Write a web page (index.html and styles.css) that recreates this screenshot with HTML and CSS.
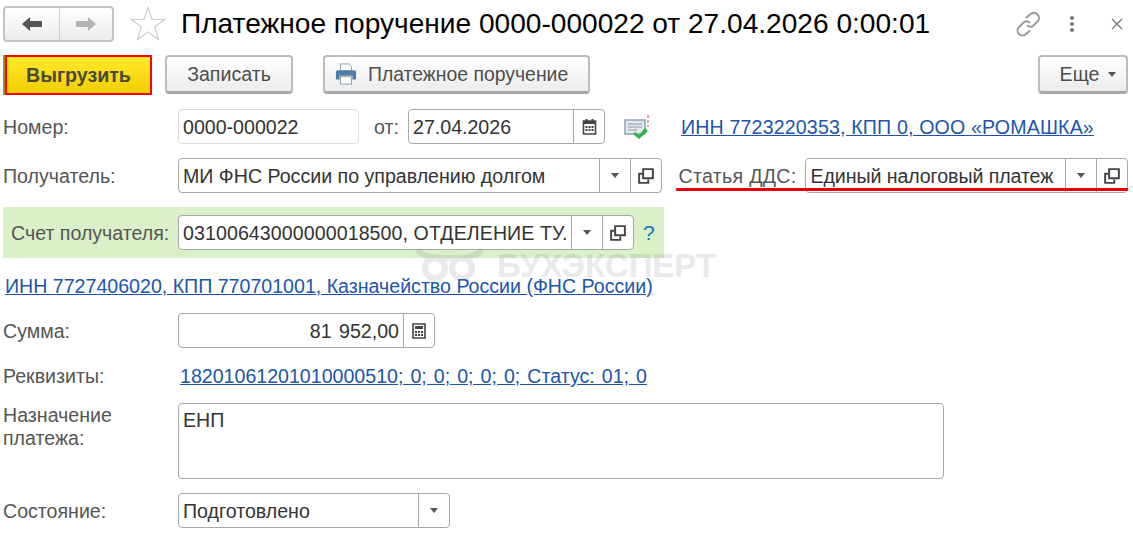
FILE: index.html
```html
<!DOCTYPE html>
<html lang="ru">

<head>
    <meta charset="UTF-8">
    <meta name="viewport" content="width=device-width, initial-scale=1.0">
    <title>Платежное поручение</title>
    <link rel="stylesheet" href="styles.css">
</head>

<body>
    <div class="watermark">
        <svg width="83" height="40" viewBox="0 0 83 40">
            <g fill="none" stroke="#6e6e82" stroke-width="6">
                <circle cx="21" cy="22" r="10" />
                <circle cx="48" cy="22" r="10" />
                <path d="M3 4 C12 13 24 12 35 12 C46 12 58 13 68 4" />
            </g>
        </svg>
        <span>БУХЭКСПЕРТ</span>
    </div>

    <div class="page">
        <div class="head">
            <div class="nav">
                <div class="nav-bt">
                    <svg width="22" height="16" viewBox="0 0 22 16">
                        <path d="M1 8 L9 1 V5 H21 V11 H9 V15 Z" fill="#555" />
                    </svg>
                </div>
                <div class="nav-bt">
                    <svg width="22" height="16" viewBox="0 0 22 16">
                        <path d="M21 8 L13 1 V5 H1 V11 H13 V15 Z" fill="#b4b4b4" />
                    </svg>
                </div>
            </div>
            <svg class="star" width="36" height="36" viewBox="0 0 36 36">
                <path d="M18 1.500 L22 13.500 H34.500 L24.500 21 L28.500 33.500 L18 26 L7.500 33.500 L11.500 21 L1.500 13.500 H14 Z" fill="#fff" stroke="#c9ced3" stroke-width="1.200" />
            </svg>
            <h1>Платежное поручение 0000-000022 от 27.04.2026 0:00:01</h1>
            <div class="head-icons">
                <svg width="26" height="26" viewBox="0 0 26 26">
                    <g fill="none" stroke="#9a9a9a" stroke-width="2">
                        <path d="M11 7 L15 3.500 C17.500 1.500 20.500 1.500 22.500 3.500 C24.500 5.500 24.500 8.500 22.500 10.500 L18.500 14.500 C16.500 16.500 13.500 16 12 14" />
                        <path d="M15 12 C13.500 10 10.500 9.500 8.500 11.500 L4 16 C2 18 2 21 4 23 C6 25 9 25 11 23 L15 19.500" />
                    </g>
                </svg>
                <div class="dots"><i></i><i></i><i></i></div>
                <svg width="12" height="12" viewBox="0 0 12 12">
                    <path d="M1 1 L11 11 M11 1 L1 11" stroke="#777" stroke-width="1.300" />
                </svg>
            </div>
        </div>

        <div class="toolbar">
            <div class="btn btn-main">Выгрузить</div>
            <div class="btn btn-save">Записать</div>
            <div class="btn btn-print">
                <svg width="22" height="24" viewBox="0 0 24 24">
                    <path d="M6 1 H15 L18 4 V9 H6 Z" fill="#fff" stroke="#8a99a8" />
                    <path d="M3 8 H21 Q23 8 23 10 V18 H19 V14 H5 V18 H1 V10 Q1 8 3 8 Z" fill="#4e7da6" />
                    <rect x="6" y="15" width="12" height="8" fill="#fff" stroke="#8a99a8" />
                </svg>
                Платежное поручение
            </div>
            <div class="btn btn-more">Еще <b class="arrow"></b></div>
        </div>

        <div class="row row-number">
            <label class="lbl">Номер:</label>
            <div class="field field-number"><span class="val">0000-000022</span></div>
            <label class="lbl-from">от:</label>
            <div class="field field-date">
                <span class="val">27.04.2026</span>
                <div class="cell cell-cal">
                    <svg width="15" height="16" viewBox="0 0 14 16">
                        <path d="M1 2 H13 V15 H1 Z" fill="none" stroke="#444" stroke-width="1.600" />
                        <path d="M1 2 H13 V5 H1 Z M3 0 H5 V3 H3 Z M9 0 H11 V3 H9 Z" fill="#444" />
                        <path d="M3 7 H5 V9 H3 Z M6 7 H8 V9 H6 Z M9 7 H11 V9 H9 Z M3 10 H5 V12 H3 Z M6 10 H8 V12 H6 Z M9 10 H11 V12 H9 Z" fill="#444" />
                    </svg>
                </div>
            </div>
            <svg class="doc-icon" width="26" height="24" viewBox="0 0 26 24">
                <path d="M1 5 H21 V19 H1 Z" fill="#e3e8ec" stroke="#8fa3b5" stroke-width="1.500" />
                <path d="M4 9 H18 M4 12 H18 M4 15 H13" stroke="#8c98a3" stroke-width="1.200" />
                <path d="M11 17 L15 20 L21 13 L24 16 L15 24 L9 19 Z" fill="#2fb344" />
                <path d="M24 0 V3 M24 5 V8 M24 10 V12" stroke="#e04040" />
            </svg>
            <a class="link link-org" href="#">ИНН 7723220353, КПП 0, ООО «РОМАШКА»</a>
        </div>

        <div class="row row-payee">
            <label class="lbl">Получатель:</label>
            <div class="field field-payee">
                <span class="val">МИ ФНС России по управлению долгом</span>
                <div class="cell"><b class="arrow"></b></div>
                <div class="cell">
                    <svg class="open-icon" width="16" height="16" viewBox="0 0 14 14">
                        <path d="M4.500 1 H13 V9 H4.500 Z" fill="none" stroke="#444" stroke-width="1.700" />
                        <path d="M4 5 H1 V13 H9 V10" fill="none" stroke="#444" stroke-width="1.700" />
                    </svg>
                </div>
            </div>
            <div class="dds">
                <label class="lbl-dds">Статья ДДС:</label>
                <div class="field field-dds">
                    <span class="val">Единый налоговый платеж</span>
                    <div class="cell"><b class="arrow"></b></div>
                    <div class="cell">
                        <svg class="open-icon" width="16" height="16" viewBox="0 0 14 14">
                            <path d="M4.500 1 H13 V9 H4.500 Z" fill="none" stroke="#444" stroke-width="1.700" />
                            <path d="M4 5 H1 V13 H9 V10" fill="none" stroke="#444" stroke-width="1.700" />
                        </svg>
                    </div>
                </div>
            </div>
        </div>

        <div class="account">
            <label class="lbl lbl-account">Счет получателя:</label>
            <div class="field field-account">
                <span class="val val-account">03100643000000018500, ОТДЕЛЕНИЕ ТУ.</span>
                <div class="cell"><b class="arrow"></b></div>
                <div class="cell">
                    <svg class="open-icon" width="16" height="16" viewBox="0 0 14 14">
                        <path d="M4.500 1 H13 V9 H4.500 Z" fill="none" stroke="#444" stroke-width="1.700" />
                        <path d="M4 5 H1 V13 H9 V10" fill="none" stroke="#444" stroke-width="1.700" />
                    </svg>
                </div>
            </div>
            <span class="hint">?</span>
        </div>

        <div class="row-link">
            <a class="link" href="#">ИНН 7727406020, КПП 770701001, Казначейство России (ФНС России)</a>
        </div>

        <div class="row row-sum">
            <label class="lbl">Сумма:</label>
            <div class="field field-sum">
                <span class="val val-right">81 952,00</span>
                <div class="cell cell-calc">
                    <svg width="14" height="16" viewBox="0 0 14 16">
                        <path d="M1 1 H13 V15 H1 Z" fill="none" stroke="#444" stroke-width="1.600" />
                        <path d="M3 3 H11 V6 H3 Z M3 8 H5 V10 H3 Z M6 8 H8 V10 H6 Z M9 8 H11 V10 H9 Z M3 11 H5 V13 H3 Z M6 11 H8 V13 H6 Z M9 11 H11 V13 H9 Z" fill="#444" />
                    </svg>
                </div>
            </div>
        </div>

        <div class="row row-props">
            <label class="lbl">Реквизиты:</label>
            <a class="link link-props" href="#">18201061201010000510; 0; 0; 0; 0; 0; Статус: 01; 0</a>
        </div>

        <div class="row row-purpose">
            <label class="lbl lbl-top">Назначение<br>платежа:</label>
            <div class="field field-purpose"><span class="val">ЕНП</span></div>
        </div>

        <div class="row row-state">
            <label class="lbl">Состояние:</label>
            <div class="field field-state">
                <span class="val">Подготовлено</span>
                <div class="cell"><b class="arrow"></b></div>
            </div>
        </div>
    </div>
</body>

</html>
```

FILE: styles.css
```css
* {
    box-sizing: border-box;
}

body {
    margin: 0;
    background: #fff;
    font-family: "Liberation Sans", Arial, sans-serif;
    font-size: 19.6px;
    color: #333;
    overflow: hidden;
}

.page {
    width: 1133px;
    height: 534px;
    padding: 6px 5px 0 3px;
    position: relative;
}

.watermark {
    position: absolute;
    z-index: 1;
    left: 414px;
    top: 246px;
    display: flex;
    align-items: center;
    color: #6e6e82;
    opacity: 0.14;
    font-size: 33px;
    font-weight: bold;
    pointer-events: none;
}

/* шапка */
.head {
    display: flex;
    align-items: center;
    height: 36px;
}

.nav {
    display: flex;
    width: 111px;
    height: 36px;
    border: 2px solid #c4c4c4;
    border-radius: 4px;
    background: linear-gradient(#fff, #ececec);
}

.nav-bt {
    flex: 1;
    display: flex;
    align-items: center;
    justify-content: center;
}

.nav-bt:first-child {
    flex: none;
    width: 55px;
    border-right: 1px solid #d0d0d0;
}

.star {
    margin-left: 16px;
}

h1 {
    margin: 0 0 0 15px;
    font-size: 28.1px;
    font-weight: normal;
    color: #000;
    white-space: nowrap;
}

.head-icons {
    margin-left: auto;
    display: flex;
    align-items: center;
}

.head-icons svg:first-child {
    margin-right: 29px;
}

.dots {
    display: flex;
    flex-direction: column;
    gap: 2px;
    margin-right: 37px;
}

.dots i {
    width: 4px;
    height: 4px;
    border-radius: 50%;
    background: #777;
}

.head-icons svg:last-child {
    margin-right: 5px;
}

/* кнопки */
.toolbar {
    display: flex;
    margin-top: 13px;
    height: 40px;
}

.btn {
    display: flex;
    align-items: center;
    justify-content: center;
    height: 39px;
    color: #4d4d4d;
    border: 2px solid #bcbcbc;
    border-bottom: 3px solid #a8a8a8;
    border-radius: 4px;
    background: linear-gradient(#fff, #ececec);
}

.btn-main {
    width: 147px;
    height: 40px;
    margin-left: 2px;
    border: 2px solid #f00;
    border-radius: 0;
    box-shadow: -2px 0 0 #a89000;
    background: linear-gradient(#ffe92c, #f1ce00);
    font-weight: bold;
    color: #4a4a3a;
}

.btn-save {
    width: 128px;
    margin-left: 13px;
}

.btn-print {
    width: 267px;
    margin-left: 30px;
    gap: 11px;
    justify-content: flex-start;
    padding-left: 10px;
    font-size: 19.4px;
}

.btn-more {
    width: 90px;
    margin-left: auto;
    gap: 9px;
    padding-left: 10px;
}

.arrow {
    display: inline-block;
    width: 0;
    height: 0;
    border-left: 4px solid transparent;
    border-right: 4px solid transparent;
    border-top: 5px solid #555;
}

/* форма */
.row {
    display: flex;
    align-items: center;
    height: 35px;
}

.lbl {
    width: 175px;
    flex: none;
    padding-top: 1px;
    color: #555;
}

.field {
    display: flex;
    align-items: stretch;
    height: 35px;
    border: 1px solid #a8a8a8;
    border-radius: 4px;
    background: #fff;
    color: #333;
}

.val {
    flex: 1;
    padding-left: 4px;
    line-height: 34px;
    white-space: nowrap;
    overflow: hidden;
}

.val-right {
    text-align: right;
    padding: 0 4px 0 0;
    word-spacing: 2px;
}

.val-account {
    letter-spacing: 0.08px;
}

.cell {
    flex: none;
    width: 31px;
    display: flex;
    align-items: center;
    justify-content: center;
    border-left: 1px solid #a8a8a8;
}

.row-number {
    margin-top: 14px;
}

.field-number {
    width: 181px;
    border-color: #dcdcdc;
}

.lbl-from {
    margin-left: 15px;
    width: 34px;
    padding-top: 1px;
    color: #555;
}

.field-date {
    width: 197px;
}

.doc-icon {
    margin-left: 19px;
}

.link {
    color: #1c55ab;
    text-decoration: underline;
    white-space: nowrap;
}

.link-org {
    margin-left: 31px;
    padding-top: 1px;
    letter-spacing: 0.16px;
}

.link-props {
    word-spacing: 1.6px;
}

.row-payee {
    margin-top: 14px;
}

.field-payee {
    width: 485px;
}

.dds {
    display: flex;
    margin-left: 14px;
    padding-left: 2px;
    width: 452px;
    height: 33px;
    margin-bottom: 2px;
    position: relative;
    align-items: flex-start;
}

.dds::after {
    content: "";
    position: absolute;
    left: 0;
    right: 0;
    bottom: 0;
    height: 3px;
    background: #e60000;
    border-radius: 1px;
}

.lbl-dds {
    width: 127px;
    flex: none;
    color: #555;
    line-height: 36px;
    letter-spacing: 0.3px;
}

.field-dds {
    flex: 1;
    letter-spacing: -0.08px;
}

.account {
    display: flex;
    align-items: center;
    width: 661px;
    height: 51px;
    margin-top: 14px;
    background: #d9f0c8;
    position: relative;
}

.lbl-account {
    padding-left: 8px;
}

.field-account {
    width: 456px;
}

.hint {
    margin-left: 9px;
    color: #0f7ab8;
    font-size: 21px;
}

.row-link {
    margin-top: 17px;
    padding-left: 2px;
    height: 22px;
    line-height: 22px;
}

.row-sum {
    margin-top: 16px;
}

.field-sum {
    width: 257px;
}

.row-props {
    margin-top: 11px;
}

.row-props .lbl {
    padding-top: 0;
    width: 177px;
}

.row-purpose {
    margin-top: 9px;
    height: 76px;
    align-items: flex-start;
}

.lbl-top {
    line-height: 23px;
    padding-top: 1px;
}

.field-purpose {
    width: 766px;
    height: 76px;
}

.field-purpose .val {
    line-height: 32px;
}

.row-state {
    margin-top: 14px;
}

.field-state {
    width: 272px;
}
```
